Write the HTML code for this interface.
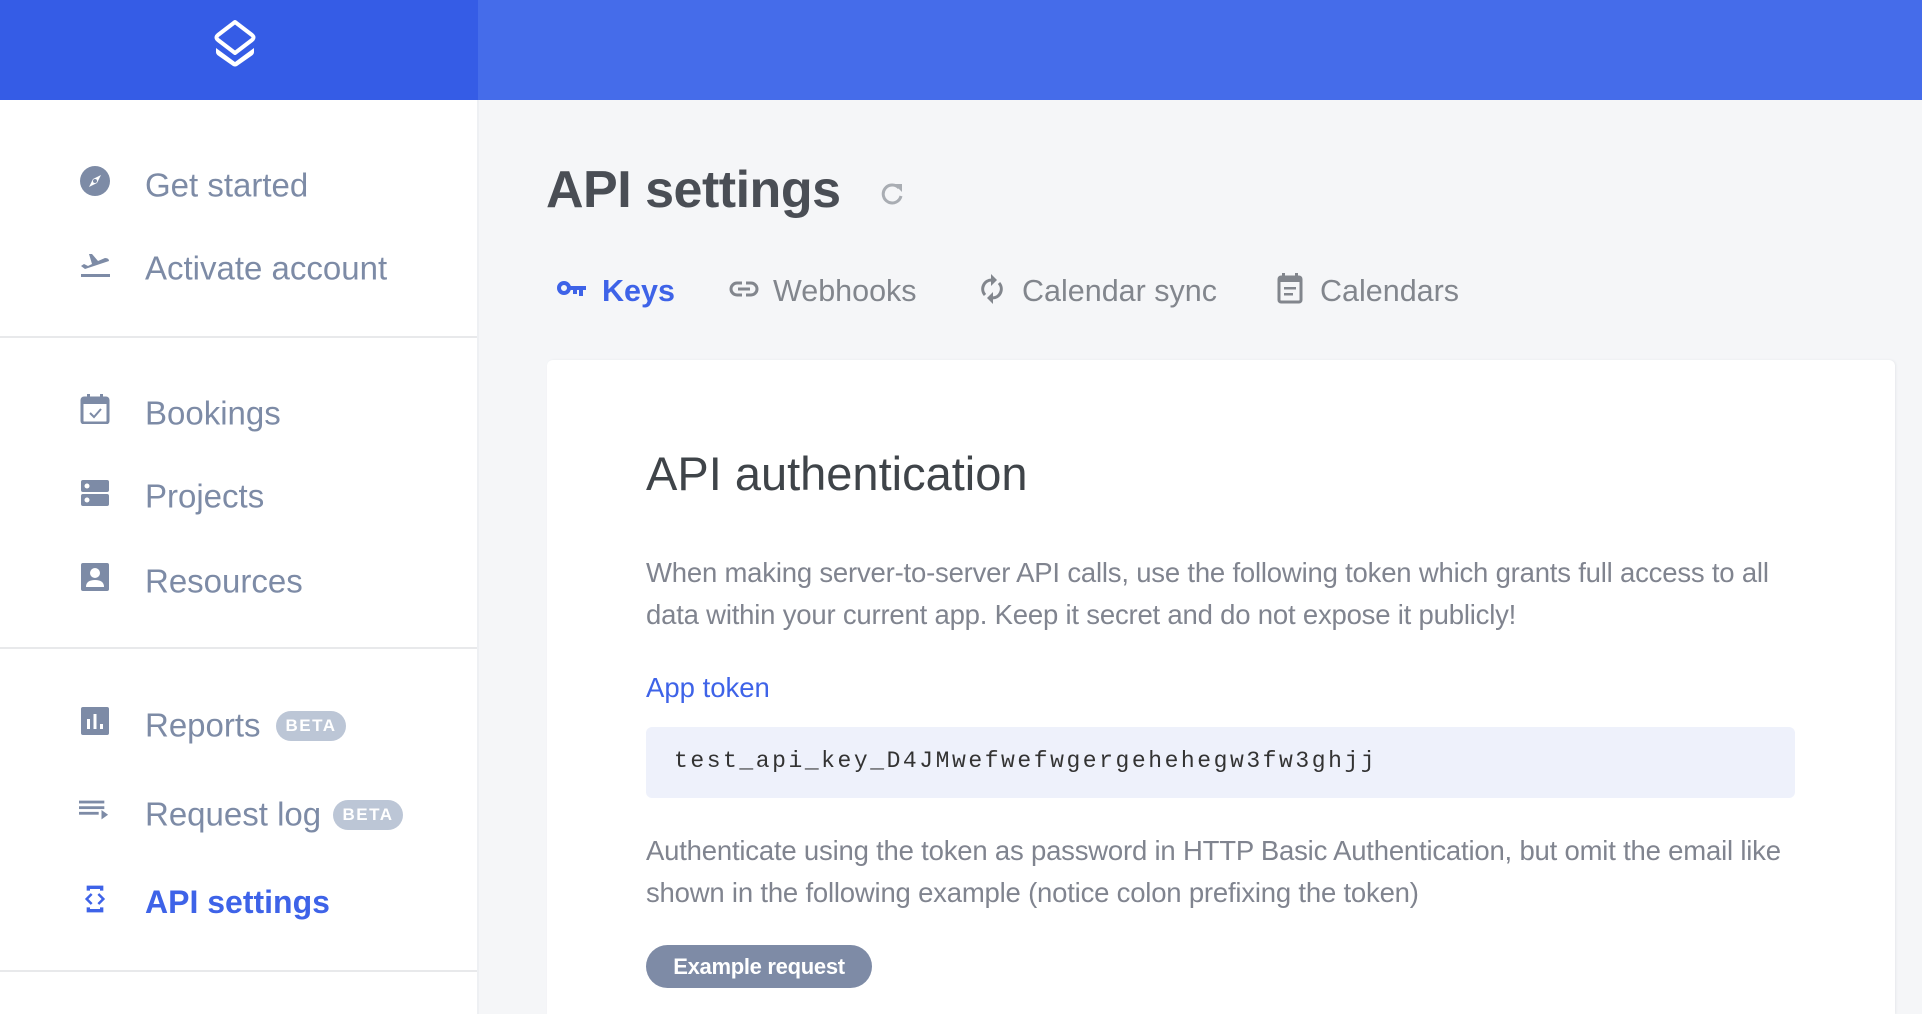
<!DOCTYPE html>
<html><head><meta charset="utf-8"><style>
*{margin:0;padding:0;box-sizing:border-box}
html,body{width:1922px;height:1014px;overflow:hidden}
body{background:#f5f6f8;font-family:"Liberation Sans",sans-serif;position:relative}
.a{position:absolute;white-space:nowrap}
.nav{position:absolute;left:145px;font-size:33px;color:#7d8ba6;transform:translateY(-50%);line-height:1}
.ic{position:absolute;left:80px;width:30px;height:30px;transform:translateY(-50%)}
.div{position:absolute;left:0;width:477px;height:2px;background:#e8e9eb}
.beta{position:absolute;height:30px;border-radius:15px;background:#bcc6d6;color:#fff;font-weight:bold;font-size:17px;letter-spacing:1.5px;line-height:30px;text-align:center;transform:translateY(-50%)}
.tab{position:absolute;top:291px;transform:translateY(-50%);font-size:30.5px;color:#82868d;line-height:1}
p.t{position:absolute;left:646px;font-size:27.5px;color:#80848f;line-height:42px;letter-spacing:-0.2px;white-space:nowrap}
</style></head><body>
<div class="a" style="left:0;top:0;width:478px;height:100px;background:#355ce6"></div>
<div class="a" style="left:478px;top:0;width:1444px;height:100px;background:#456cea"></div>
<svg class="a" style="left:212px;top:18px" width="46" height="50" viewBox="0 0 46 50">
<path d="M23 4 L40 17 Q43 19.5 40 22 L23 35 L6 22 Q3 19.5 6 17 Z" fill="none" stroke="#fff" stroke-width="4" stroke-linejoin="round"/>
<path d="M4 30 L23 44 L42 30 L42 34 Q42 36 40 37.5 L25 48 Q23 49 21 48 L6 37.5 Q4 36 4 34 Z" fill="#fff"/>
</svg>
<div class="a" style="left:0;top:100px;width:477px;height:914px;background:#fff"></div>
<div class="a" style="left:477px;top:100px;width:2px;height:914px;background:#eef0f3"></div>

<svg class="ic" style="top:181px" viewBox="0 0 30 30"><circle cx="15" cy="15" r="15" fill="#7d8ba6"/><path d="M21 9 L17 17 L9 21 L13 13 Z" fill="#fff"/><circle cx="15" cy="15" r="2" fill="#7d8ba6"/></svg>
<div class="nav" style="top:185px">Get started</div>
<svg class="ic" style="top:264px" viewBox="0 0 30 30"><path d="M1 17 L4 15 L8 17 L12 15 L9 5 L12 5 L18 12 L25 9 Q29 9 29 12 L5 20 Z" fill="#7d8ba6"/><rect x="1" y="25" width="29" height="3" fill="#7d8ba6"/></svg>
<div class="nav" style="top:268px">Activate account</div>
<div class="div" style="top:336px"></div>

<svg class="ic" style="top:409px" viewBox="0 0 30 30"><rect x="2" y="4" width="26" height="25" rx="2" fill="none" stroke="#7d8ba6" stroke-width="3"/><rect x="2" y="4" width="26" height="6" fill="#7d8ba6"/><rect x="7" y="0" width="3" height="5" fill="#7d8ba6"/><rect x="20" y="0" width="3" height="5" fill="#7d8ba6"/><path d="M10 19 L14 23 L21 15" fill="none" stroke="#7d8ba6" stroke-width="2"/></svg>
<div class="nav" style="top:413px">Bookings</div>
<svg class="ic" style="top:493px" viewBox="0 0 30 30"><rect x="1" y="2" width="28" height="12" rx="2" fill="#7d8ba6"/><rect x="1" y="16" width="28" height="12" rx="2" fill="#7d8ba6"/><circle cx="7" cy="8" r="2.5" fill="#fff"/><circle cx="7" cy="22" r="2.5" fill="#fff"/></svg>
<div class="nav" style="top:496px">Projects</div>
<svg class="ic" style="top:577px" viewBox="0 0 30 30"><rect x="1" y="1" width="28" height="28" rx="2" fill="#7d8ba6"/><circle cx="15" cy="11" r="5" fill="#fff"/><path d="M6 25 Q6 18 15 18 Q24 18 24 25 Z" fill="#fff"/></svg>
<div class="nav" style="top:581px">Resources</div>
<div class="div" style="top:647px"></div>

<svg class="ic" style="top:721px" viewBox="0 0 30 30"><rect x="1" y="1" width="28" height="28" rx="2" fill="#7d8ba6"/><rect x="7" y="13" width="3" height="10" fill="#fff"/><rect x="13.5" y="8" width="3" height="15" fill="#fff"/><rect x="20" y="18" width="3" height="5" fill="#fff"/></svg>
<div class="nav" style="top:725px">Reports</div>
<div class="beta" style="left:276px;top:726px;width:70px">BETA</div>
<svg class="ic" style="top:810px;left:79px" viewBox="0 0 32 30"><rect x="0" y="5" width="27" height="3" fill="#7d8ba6"/><rect x="0" y="11" width="27" height="3" fill="#7d8ba6"/><rect x="0" y="17" width="21" height="3" fill="#7d8ba6"/><path d="M24 15 L31 20 L24 25 Z" fill="#7d8ba6"/></svg>
<div class="nav" style="top:814px">Request log</div>
<div class="beta" style="left:333px;top:815px;width:70px">BETA</div>
<svg class="ic" style="top:899px" viewBox="0 0 30 36"><path d="M5 2 H25 V8 H21 V6 H9 V8 H5 Z M5 34 H25 V28 H21 V30 H9 V28 H5 Z" fill="#3e63e8"/><path d="M11 12 L5 18 L11 24 M19 12 L25 18 L19 24" fill="none" stroke="#3e63e8" stroke-width="3"/></svg>
<div class="nav" style="top:902px;color:#3e63e8;font-weight:bold;font-size:32px">API settings</div>
<div class="div" style="top:970px"></div>

<div class="a" style="left:546px;top:164px;font-size:52px;color:#4a4e55;letter-spacing:-0.5px;line-height:1;font-weight:bold">API settings</div>
<svg class="a" style="left:879px;top:181px" width="26" height="26" viewBox="0 0 26 26"><path d="M20 7 A9 9 0 1 0 22 15" fill="none" stroke="#a9adb3" stroke-width="3"/><path d="M15 3 L23 3 L23 11 Z" fill="#a9adb3"/></svg>

<svg class="a" style="left:557px;top:280px" width="30" height="20" viewBox="0 0 30 20"><circle cx="7" cy="8" r="5" fill="none" stroke="#3e63e8" stroke-width="4"/><path d="M12 6 H29 V10 H26 V16 H22 V10 H20 V14 H16 V10 H12 Z" fill="#3e63e8"/></svg>
<div class="tab" style="left:602px;color:#3e63e8;font-weight:bold">Keys</div>
<svg class="a" style="left:729px;top:280px" width="30" height="18" viewBox="0 0 30 18"><rect x="2" y="3" width="26" height="12" rx="6" fill="none" stroke="#82868d" stroke-width="3"/><rect x="9" y="7.5" width="12" height="3" fill="#82868d"/><rect x="13" y="1" width="4" height="5" fill="#f5f6f8"/><rect x="13" y="12" width="4" height="5" fill="#f5f6f8"/></svg>
<div class="tab" style="left:773px">Webhooks</div>
<svg class="a" style="left:979px;top:273px" width="26" height="32" viewBox="0 0 26 32"><path d="M6 22 A9 9 0 0 1 13 7" fill="none" stroke="#82868d" stroke-width="3"/><path d="M12 1 L18 7 L12 13 Z" fill="#82868d"/><path d="M20 10 A9 9 0 0 1 13 25" fill="none" stroke="#82868d" stroke-width="3"/><path d="M14 19 L8 25 L14 31 Z" fill="#82868d"/></svg>
<div class="tab" style="left:1022px">Calendar sync</div>
<svg class="a" style="left:1277px;top:272px" width="26" height="32" viewBox="0 0 26 32"><rect x="2" y="5" width="22" height="25" rx="2" fill="none" stroke="#82868d" stroke-width="3"/><rect x="2" y="5" width="22" height="5" fill="#82868d"/><rect x="5" y="1" width="3" height="5" fill="#82868d"/><rect x="18" y="1" width="3" height="5" fill="#82868d"/><rect x="7" y="15" width="12" height="2.5" fill="#82868d"/><rect x="7" y="21" width="9" height="2.5" fill="#82868d"/></svg>
<div class="tab" style="left:1320px">Calendars</div>

<div class="a" style="left:547px;top:360px;width:1348px;height:654px;background:#fff;border-radius:6px 6px 0 0;box-shadow:1px 0 2px #e6e8ec"></div>
<div class="a" style="left:646px;top:450px;font-size:47px;color:#3f4449;line-height:1">API authentication</div>
<p class="t" style="top:552px">When making server-to-server API calls, use the following token which grants full access to all<br>data within your current app. Keep it secret and do not expose it publicly!</p>
<div class="a" style="left:646px;top:674px;font-size:27.5px;color:#3e63e8;line-height:1">App token</div>
<div class="a" style="left:646px;top:727px;width:1149px;height:71px;background:#eef1fb;border-radius:6px"></div>
<div class="a" style="left:674px;top:750px;font-family:'Liberation Mono',monospace;font-size:23px;color:#333;letter-spacing:2.55px;line-height:1">test_api_key_D4JMwefwefwgergehehegw3fw3ghjj</div>
<p class="t" style="top:830px">Authenticate using the token as password in HTTP Basic Authentication, but omit the email like<br>shown in the following example (notice colon prefixing the token)</p>
<div class="a" style="left:646px;top:945px;width:226px;height:43px;border-radius:22px;background:#7e8ba6;color:#fff;font-weight:bold;font-size:22px;line-height:43px;text-align:center;letter-spacing:-0.3px">Example request</div>
</body></html>
